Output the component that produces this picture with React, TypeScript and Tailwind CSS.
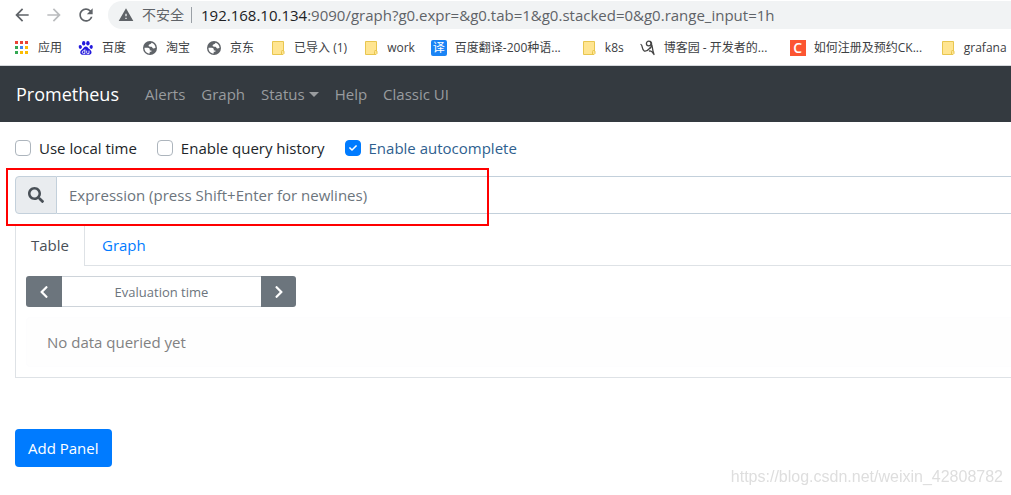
import { useState } from "react";
import type { ReactNode } from "react";
import { FaCheck, FaChevronLeft, FaChevronRight, FaSearch } from "react-icons/fa";
import { MdArrowBack, MdArrowForward, MdRefresh, MdWarning } from "react-icons/md";

function AppsIcon() {
    const colors = ["#ea4335", "#ea4335", "#ea4335", "#34a853", "#4285f4", "#fbbc04", "#34a853", "#fbbc04", "#fbbc04"];
    return (
        <svg viewBox="0 0 16 16" className="size-4">
            {colors.map((color, i) => (
                <rect key={i} x={1 + (i % 3) * 5} y={1 + Math.floor(i / 3) * 5} width="3" height="3" fill={color} />
            ))}
        </svg>
    );
}

function PawIcon() {
    return (
        <svg viewBox="0 0 16 16" className="size-4" fill="#2319dc">
            <ellipse cx="5.7" cy="3.2" rx="1.7" ry="2.2" />
            <ellipse cx="9.9" cy="3.2" rx="1.7" ry="2.2" />
            <ellipse cx="2.3" cy="6.9" rx="1.6" ry="2" transform="rotate(-12 2.3 6.9)" />
            <ellipse cx="13.2" cy="6.9" rx="1.6" ry="2" transform="rotate(10 13.2 6.9)" />
            <path d="M7.8 6.4c1.6 0 2.2 1.5 3.2 2.4 1.2 1.1 2.8 1.9 2.5 4-.3 1.7-1.9 2.2-3.2 2-1.7-.2-3.2-.2-4.8 0-1.4.2-3-.2-3.2-2-.2-2 1.3-2.8 2.3-3.9.9-.9 1.6-2.5 3.2-2.5z" />
            <path d="M6.9 9.3v4.3H5.5c-1.7 0-1.7-2.8 0-2.8h1.4M8.7 10.6v2.2c0 .5.3.8.7.8H11v-3" fill="none" stroke="#fff" strokeWidth="0.9" />
        </svg>
    );
}

function GlobeIcon() {
    return (
        <svg viewBox="0 0 16 16" className="size-4">
            <circle cx="8" cy="8" r="7" fill="#5f6368" />
            <path d="M2.5 7.7h3.3c1.3 0 2 .9 2 2v.8h1.6v1.3H7.7v1.7C4.7 13.5 2.3 11 2.5 7.7z" fill="#fff" />
            <path d="M9.5 2.7c2.5.7 4.1 2.8 4 5.4-.7-.3-1 .5-1.9.5-1.3 0-1.1-1.7-2.3-1.8-1.5-.1-2.7-.1-2.7-1.2C6.6 4.2 9.2 4.4 9.5 2.7z" fill="#fff" />
        </svg>
    );
}

function FolderIcon() {
    return (
        <svg viewBox="0 0 16 16" className="size-4">
            <path d="M2.5 1.5h11v9.5l.5.5v2l-1 1H2.5z" fill="#ffe591" stroke="#e8c64f" />
            <path d="M11.5 14V11.5l1-1.5 1 1.5" fill="none" stroke="#e8c64f" />
        </svg>
    );
}

function CnblogsIcon() {
    return (
        <svg viewBox="0 0 16 16" className="size-4" fill="none" stroke="#444" strokeWidth="1.3" strokeLinecap="round">
            <path d="M1 4.5c1.8.6.8 5.8 3.3 6.5 2.5.5 4.500-1.500 5.800-3" />
            <circle cx="8.7" cy="3.5" r="2.3" />
            <path d="M10.5 1.5c2 2 1.2 5-.4 6.5M12 5.5c.4 2.5.8 6 2 9M9.5 11c1.3-.3 2.8.8 4.5 3.5" />
        </svg>
    );
}

const bookmarks: { icon: ReactNode; label: string; long?: boolean }[] = [
    { icon: <AppsIcon />, label: "应用" },
    { icon: <PawIcon />, label: "百度" },
    { icon: <GlobeIcon />, label: "淘宝" },
    { icon: <GlobeIcon />, label: "京东" },
    { icon: <FolderIcon />, label: "已导入 (1)" },
    { icon: <FolderIcon />, label: "work" },
    {
        icon: <span className="flex size-4 items-center justify-center rounded-xs bg-[#1a84f5] text-xs leading-none text-white">译</span>,
        label: "百度翻译-200种语...",
        long: true,
    },
    { icon: <FolderIcon />, label: "k8s" },
    { icon: <CnblogsIcon />, label: "博客园 - 开发者的...", long: true },
    {
        icon: <span className="flex size-4 items-center justify-center bg-[#fc5531] text-sm leading-none font-semibold text-white">C</span>,
        label: "如何注册及预约CK...",
        long: true,
    },
    { icon: <FolderIcon />, label: "grafana" },
];

function BrowserChrome() {
    return (
        <div className="overflow-hidden border-b border-[#d5d8dc] bg-white">
            <div className="flex h-[30px] items-center pl-3">
                <div className="flex gap-3 text-[#5f6368]">
                    <button aria-label="Back"><MdArrowBack className="size-5" /></button>
                    <button aria-label="Forward" className="text-[#babcbe]"><MdArrowForward className="size-5" /></button>
                    <button aria-label="Reload"><MdRefresh className="size-5" /></button>
                </div>
                <div className="ml-3 flex h-7 flex-1 items-center rounded-l-full bg-[#f1f3f4] pl-2.5 text-[#5f6368]">
                    <MdWarning className="size-4" />
                    <span className="ml-2 text-sm">不安全</span>
                    <span className="mr-[9px] ml-[7px] h-4 w-px bg-[#9aa0a6]" />
                    <span className="whitespace-nowrap">
                        <span className="text-[#202124]">192.168.10.134</span>:9090/graph?g0.expr=&amp;g0.tab=1&amp;g0.stacked=0&amp;g0.range_input=1h
                    </span>
                </div>
            </div>
            <div className="flex h-[35px] items-center gap-4 pl-3.5 text-xs text-[#3c4043]">
                {bookmarks.map((bookmark) => (
                    <a key={bookmark.label} href="#" className="flex shrink-0 items-center gap-2 whitespace-nowrap">
                        {bookmark.icon}
                        <span className={bookmark.long ? "min-w-[110px]" : ""}>{bookmark.label}</span>
                    </a>
                ))}
            </div>
        </div>
    );
}

function Navbar() {
    return (
        <nav className="flex h-14 items-center bg-[#343a40] px-4 text-[15px] text-[#999c9f]">
            <a href="#" className="mr-[18px] text-lg text-white">Prometheus</a>
            <a href="#" className="px-2">Alerts</a>
            <a href="#" className="px-2">Graph</a>
            <button className="flex items-center gap-1 px-2">
                Status
                <span className="border-x-5 border-t-5 border-x-transparent border-t-current" />
            </button>
            <a href="#" className="px-2">Help</a>
            <a href="#" className="px-2">Classic UI</a>
        </nav>
    );
}

function Checkbox({ label, defaultChecked = false }: { label: string; defaultChecked?: boolean }) {
    return (
        <label className="flex items-center gap-2 has-checked:text-[#2f5f8f]">
            <span className="grid size-4">
                <input
                    type="checkbox"
                    defaultChecked={defaultChecked}
                    className="peer col-start-1 row-start-1 size-4 appearance-none rounded border border-[#adb5bd] bg-white checked:border-[#007bff] checked:bg-[#007bff]"
                />
                <FaCheck className="pointer-events-none col-start-1 row-start-1 hidden size-2 place-self-center text-white peer-checked:block" />
            </span>
            {label}
        </label>
    );
}

export default function App() {
    const [tab, setTab] = useState("Table");

    return (
        <div className="min-h-screen overflow-hidden bg-white font-['Open_Sans','Noto_Sans_CJK_SC',sans-serif] text-[15px] leading-6 text-[#212529]">
            <BrowserChrome />
            <Navbar />
            <main className="pt-3.5 pl-[15px]">
                <div className="flex gap-5">
                    <Checkbox label="Use local time" />
                    <Checkbox label="Enable query history" />
                    <Checkbox label="Enable autocomplete" defaultChecked />
                </div>

                {/* Expression input */}
                <div className="relative mt-4 flex h-[38px]">
                    <span className="flex w-[42px] items-center justify-center rounded-l border border-[#c3d0db] bg-[#e9ecef] text-[#495057]">
                        <FaSearch className="size-4" />
                    </span>
                    <input
                        aria-label="Expression"
                        placeholder="Expression (press Shift+Enter for newlines)"
                        className="min-w-0 flex-1 border-y border-[#c3d0db] px-3 outline-none placeholder:text-[#6c757d]"
                    />
                    <div className="pointer-events-none absolute -top-2 -left-[9px] h-[58px] w-[483px] border-2 border-[#f00]" />
                </div>

                {/* Tabs */}
                <div className="mt-2.5 flex h-[42px] border-b border-[#dee2e6]">
                    {["Table", "Graph"].map((name) => (
                        <button
                            key={name}
                            onClick={() => setTab(name)}
                            className={
                                tab === name
                                    ? "-mb-px border-x border-[#dee2e6] bg-white px-[15px] text-[#495057]"
                                    : "px-[17px] text-[#007bff]"
                            }
                        >
                            {name}
                        </button>
                    ))}
                </div>
                <div className="border-b border-l border-[#dee2e6] p-2.5 pr-0">
                    <div className="flex h-[31px] text-[13px]">
                        <button aria-label="Earlier" className="flex w-9 items-center justify-center rounded-l-[3px] bg-[#6c757d] text-white">
                            <FaChevronLeft className="size-3.5" />
                        </button>
                        <input
                            aria-label="Evaluation time"
                            placeholder="Evaluation time"
                            className="w-[199px] border-y border-[#ced4da] text-center outline-none placeholder:text-[#6c757d]"
                        />
                        <button aria-label="Later" className="flex w-[35px] items-center justify-center rounded-r-[3px] bg-[#6c757d] text-white">
                            <FaChevronRight className="size-3.5" />
                        </button>
                    </div>
                    <div className="mt-2.5 rounded-l border border-r-0 border-[#fdfdfe] bg-[#fefefe] px-5 py-3 text-[#818182]">
                        No data queried yet
                    </div>
                </div>

                <button className="mt-[51px] h-[38px] rounded bg-[#007bff] px-[13px] text-white">Add Panel</button>
            </main>
            <div className="fixed right-2 bottom-1.5 font-['Liberation_Sans',sans-serif] text-base text-[#dedede]">
                https://blog.csdn.net/weixin_42808782
            </div>
        </div>
    );
}
